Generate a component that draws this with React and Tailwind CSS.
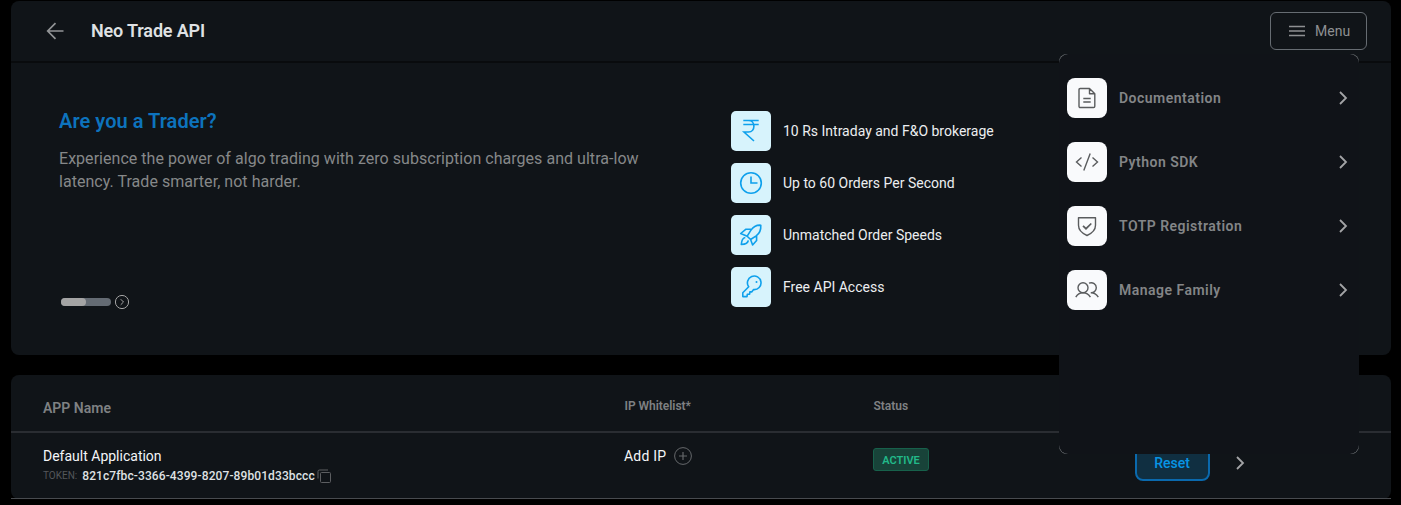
import React from "react";

function Icon({ size = 24, className = "", children, sw = 1.4 }) {
  return (
    <svg
      width={size}
      height={size}
      viewBox={`0 0 ${size} ${size}`}
      fill="none"
      stroke="currentColor"
      strokeWidth={sw}
      className={`block shrink-0 ${className}`}
    >
      {children}
    </svg>
  );
}

function Chevron({ className = "" }) {
  return (
    <Icon size={16} sw={1.8} className={className}>
      <path d="M5 2l6 6-6 6" />
    </Icon>
  );
}

const features = [
  {
    label: "10 Rs Intraday and F&O brokerage",
    icon: (
      <Icon sw={1.6}>
        <path d="M4.300 1.500h15.400M4.300 5.500h15.400M5 1.500h4.500c7.200 0 7.200 11.500 0 11.500H5l10 9" />
      </Icon>
    ),
  },
  {
    label: "Up to 60 Orders Per Second",
    icon: (
      <Icon sw={1.6}>
        <circle cx="12" cy="12" r="10.3" />
        <path d="M12 5.500V12h6.500" />
      </Icon>
    ),
  },
  {
    label: "Unmatched Order Speeds",
    icon: (
      <Icon sw={1.6}>
        <path
          strokeLinejoin="round"
          d="M21.800 2.200c-4.800-.3-7.600 1.500-10 5.200l-3.600 5.800 3.400 3.300 5.600-3.600c3.800-2.900 4.900-6 4.600-10.700zM12 6.200H7L1.700 10.500l6.500 2.700M17.600 12.800v4.700L13.600 22l-2-5.500M6.300 14.500c-2.500.3-3.700 2.700-4 7 4.200-.3 6.700-1.600 7-4.200"
        />
      </Icon>
    ),
  },
  {
    label: "Free API Access",
    icon: (
      <Icon sw={1.6}>
        <path
          strokeLinejoin="round"
          d="M9.700 11.800L3.800 17.700v3.900h4.200l.3-2.300 2.300-.2.300-2.200h1.800l1.900-2.300a6.800 6.800 0 1 0-4.900-2.800z"
        />
        <circle cx="17.500" cy="7" r="1" fill="currentColor" stroke="none" />
      </Icon>
    ),
  },
];

const menuItems = [
  {
    label: "Documentation",
    icon: (
      <Icon>
        <path
          strokeLinejoin="round"
          d="M5.200 2.500h9.300l5.300 5.300v12.500a1.200 1.200 0 0 1-1.200 1.200H5.200A1.200 1.200 0 0 1 4 20.300V3.700a1.200 1.200 0 0 1 1.200-1.200zM14.500 2.500v5.300h5.300M8.300 12.500h7.400M8.300 16h7.400"
        />
      </Icon>
    ),
  },
  {
    label: "Python SDK",
    icon: (
      <Icon>
        <path d="M6.500 7.500L1.500 12l5 4.500M17.500 7.500l5 4.500-5 4.500M15.200 3.500L8.800 20.500" />
      </Icon>
    ),
  },
  {
    label: "TOTP Registration",
    icon: (
      <Icon>
        <path strokeLinejoin="round" d="M3.500 3.800h17v7.500c0 5-3.500 8-8.500 10.200-5-2.200-8.500-5.200-8.500-10.200z" />
        <path strokeWidth="1.700" d="M8 11.800l3 2.900 5.300-5.200" />
      </Icon>
    ),
  },
  {
    label: "Manage Family",
    icon: (
      <Icon>
        <circle cx="8" cy="9.800" r="5" />
        <path d="M.8 19.200c1.400-2.600 4-4.400 7.200-4.400s5.900 1.800 7.400 4.400M14 5.200c4-1.300 7.300 1.100 7.300 4.600 0 3.300-2.900 5.200-5.500 5 3.300 0 5.900 1.700 7.500 4.400" />
      </Icon>
    ),
  },
];

function MenuPanel() {
  return (
    <div className="absolute left-[1059px] top-[54px] h-[400px] w-[300px] rounded-lg bg-[#7c8084]">
      <div className="flex h-full w-full flex-col gap-6 rounded-[9px] bg-[#101318] px-2 pt-6">
        {menuItems.map((m) => (
          <div key={m.label} className="flex h-10 items-center">
            <div className="flex size-10 items-center justify-center rounded-lg bg-[#f9fafc] text-[#5a5c5e]">
              {m.icon}
            </div>
            <span className="ml-3 flex-1 text-sm font-semibold tracking-[0.48px] text-[#838587]">{m.label}</span>
            <Chevron className="text-[#a3a4a6]" />
          </div>
        ))}
      </div>
    </div>
  );
}

export default function App() {
  return (
    <div className="relative h-[505px] w-[1401px] overflow-hidden bg-black pl-[11px] pt-px font-['Roboto',sans-serif]">
      <section className="h-[354px] w-[1380px] rounded-lg bg-[#101418]">
        <header className="flex h-[62px] items-center border-b-2 border-[#090b0d] pl-8 pr-6">
          <Icon className="text-[#929496]" sw={1.7}>
            <path d="M20.500 12H5M12.500 4.200L4.700 12l7.800 7.800" />
          </Icon>
          <h1 className="ml-6 flex-1 text-lg font-semibold tracking-[-0.15px] text-[#dfe1e3]">Neo Trade API</h1>
          <button className="flex h-[38px] w-[97px] items-center rounded-md border border-[#666c72] pl-[17px] text-sm text-[#8e9092]">
            <Icon size={18} sw={1.6}>
              <path d="M1 4.500h16M1 9h16M1 13.500h16" />
            </Icon>
            <span className="ml-[9px]">Menu</span>
          </button>
        </header>
        <div className="flex pl-12 pt-12">
          <div className="w-[672px]">
            <h2 className="text-xl leading-5 font-semibold tracking-[0.05px] text-[#0d73bd]">Are you a Trader?</h2>
            <p className="mt-4 w-[600px] text-base leading-[23px] tracking-[0.035px] text-[#868889]">
              Experience the power of algo trading with zero subscription charges and ultra-low latency. Trade smarter,
              not harder.
            </p>
            <div className="ml-0.5 mt-[101px] flex h-4 items-center">
              <div className="h-2 w-[50px] rounded-full bg-[#646b73]">
                <div className="h-2 w-[25px] rounded-full bg-[#a4a4a4]" />
              </div>
              <Icon size={16} sw={1} className="ml-[3px] text-[#a4a4a4]">
                <circle cx="8" cy="8" r="6.600" />
                <path d="M6.700 5.200L9.500 8l-2.800 2.800" />
              </Icon>
            </div>
          </div>
          <ul className="flex flex-col gap-3">
            {features.map((f) => (
              <li key={f.label} className="flex h-10 items-center gap-3 text-sm text-[#eceef0]">
                <span className="flex size-10 items-center justify-center rounded-[5px] bg-[#d7f3fc] text-[#0ea0ec]">
                  {f.icon}
                </span>
                {f.label}
              </li>
            ))}
          </ul>
        </div>
      </section>

      <section className="mt-5 w-[1380px] rounded-lg bg-[#101418]">
        <div className="flex h-[58px] items-center border-b-2 border-[#2a2d32] pl-8 pt-2.5 font-semibold text-[#7f8183]">
          <span className="w-[581.5px] text-sm">APP Name</span>
          <span className="-mt-1 w-[249px] text-xs tracking-[-0.03px]">IP Whitelist*</span>
          <span className="-mt-1 text-xs">Status</span>
        </div>
        <div className="flex h-[66px] border-b border-[#484b4f] pl-8">
          <div className="w-[581px] pt-[11px]">
            <div className="text-sm leading-6 text-[#f4f6f8]">Default Application</div>
            <div className="flex h-4 items-center text-xs text-[#dfe1e3]">
              <span className="mr-[5px] text-[10px] text-[#54575a]">TOKEN:</span>
              <span className="font-medium tracking-[0.1px]">821c7fbc-3366-4399-8207-89b01d33bccc</span>
              <Icon size={14} sw={1} className="ml-0.5 text-[#5c5e61]">
                <rect x="3.500" y="3.500" width="10" height="10" rx="1" />
                <path d="M1 9.500V2.500Q1 1 2.500 1H11" />
              </Icon>
            </div>
          </div>
          <div className="flex h-[46px] w-[249px] items-center text-sm tracking-[0.2px] text-[#f4f6f8]">
            Add IP
            <Icon size={18} sw={1} className="ml-2 text-[#65686b]">
              <circle cx="9" cy="9" r="8.400" />
              <path d="M9 5v8M5 9h8" strokeWidth="1.200" />
            </Icon>
          </div>
          <div className="w-[262px] pt-[15px]">
            <span className="flex h-[23px] w-[56px] items-center justify-center rounded-[3px] border border-[#17614b] bg-[#184339] pt-[3px] text-[11px] font-semibold text-[#22b989]">
              ACTIVE
            </span>
          </div>
          <button className="mt-[-3px] flex h-[51px] w-[75px] items-end justify-center rounded-lg border-2 border-[#0a69ad] bg-[#102f41] pr-px pb-1.5 text-sm font-medium text-[#0795e5]">
            Reset
          </button>
          <Chevron className="ml-[22px] mt-[22px] text-[#a3a4a6]" />
        </div>
      </section>

      <MenuPanel />
    </div>
  );
}
